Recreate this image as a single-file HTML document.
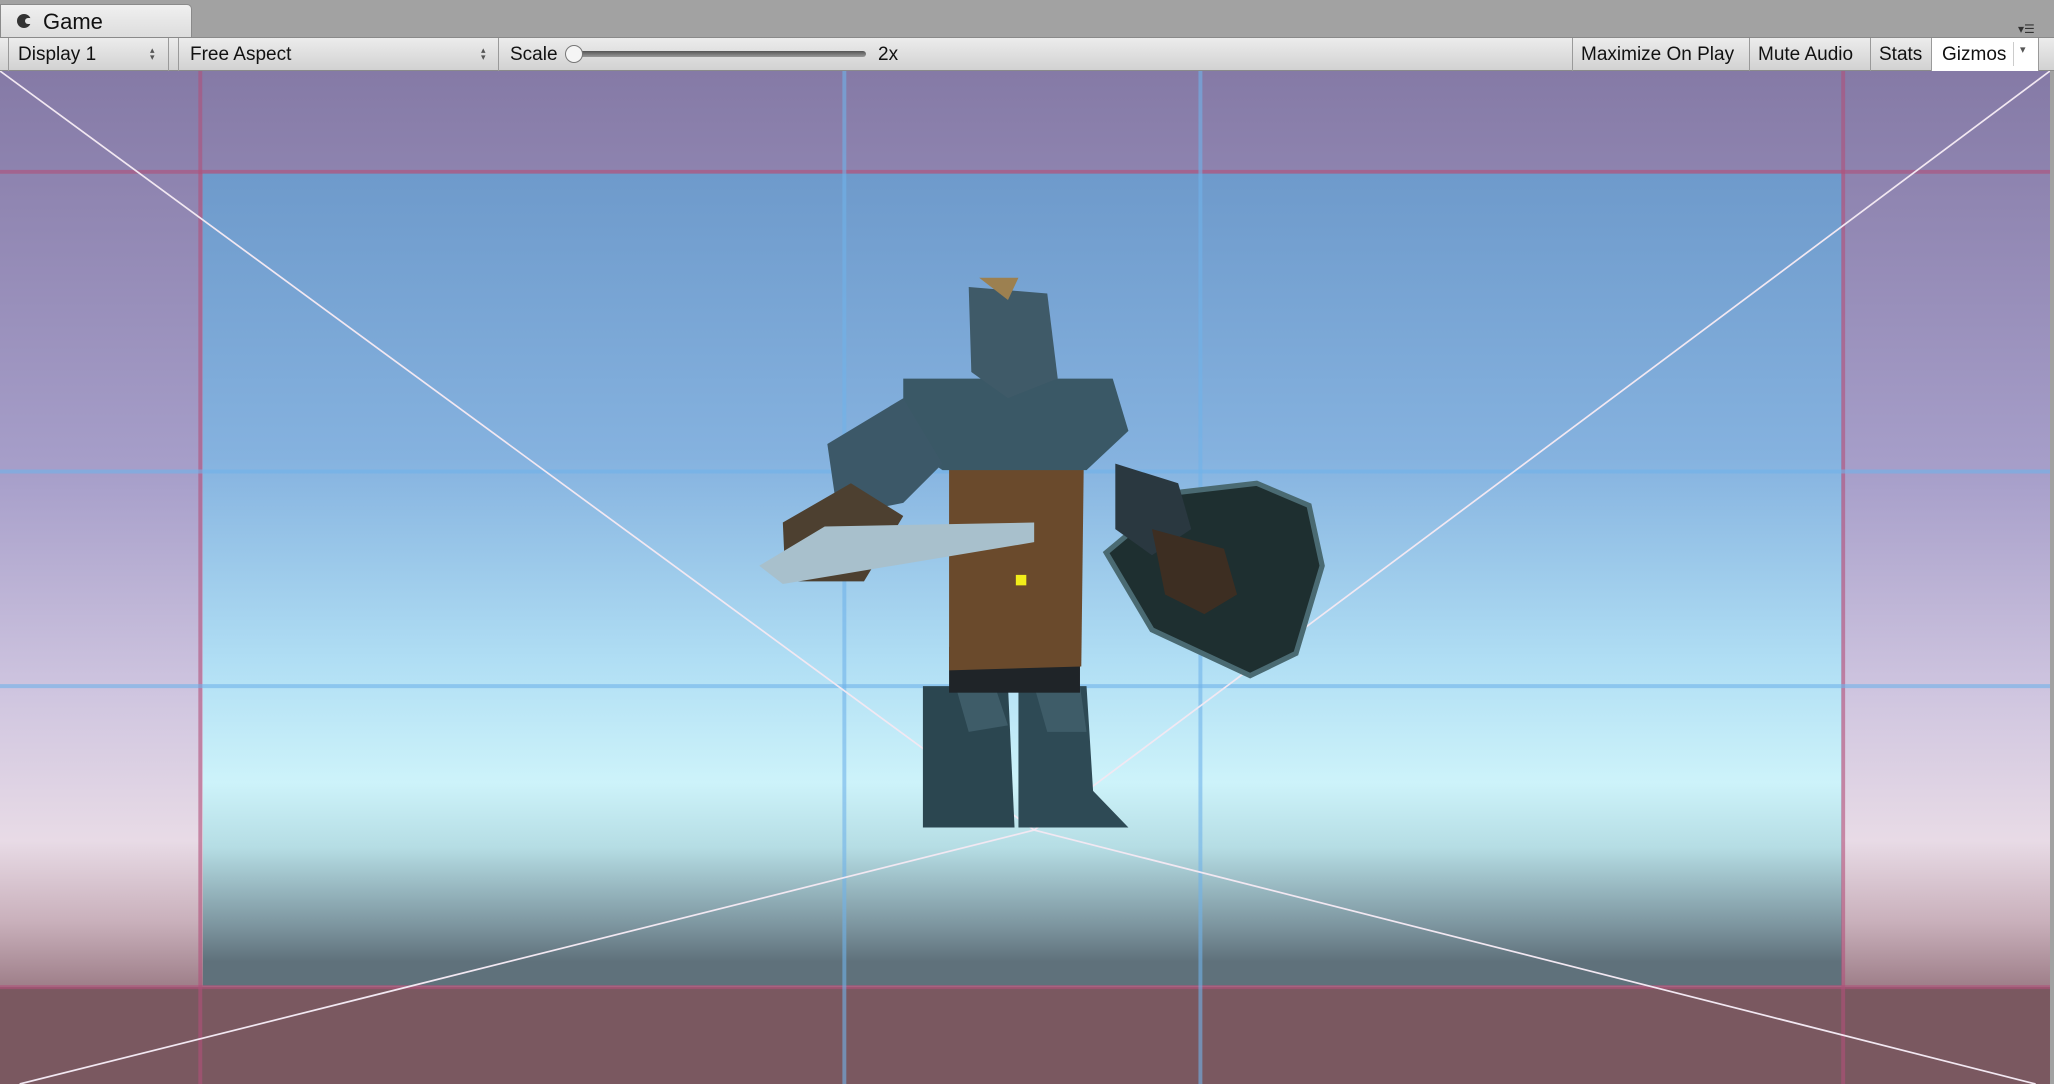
<!DOCTYPE html>
<html><head><meta charset="utf-8"><style>
html,body{margin:0;padding:0;width:2054px;height:1084px;overflow:hidden;background:#a2a2a2;font-family:"Liberation Sans",sans-serif}
.tab{position:absolute;left:0;top:4px;width:192px;height:34px;background:linear-gradient(#f0f0f0,#dcdcdc);border:1px solid #8a8a8a;border-bottom:none;border-radius:0 5px 0 0;box-sizing:border-box}
.tab span{position:absolute;left:42px;top:4px;font-size:22px;color:#111}
.tab i{position:absolute;left:16px;top:9px;width:14px;height:14px;border-radius:50%;background:#333}
.tab i:after{content:"";position:absolute;left:8px;top:4px;width:8px;height:6px;background:#e6e6e6;border-radius:3px}
.bar{position:absolute;left:0;top:37px;width:2054px;height:34px;background:linear-gradient(#ececec,#d2d2d2);border-top:1px solid #8a8a8a;border-bottom:1px solid #8a8a8a;box-sizing:border-box}
.t{position:absolute;top:6px;font-size:19px;color:#111;white-space:nowrap}
.sep{position:absolute;top:0;width:1px;height:33px;background:#9a9a9a}
.btn{position:absolute;top:0;height:33px;border-left:1px solid #9a9a9a;box-sizing:border-box}
.ud{position:absolute;top:9px;font-size:9px;line-height:7px;color:#555}
</style></head><body>
<div class="tab"><i></i><span>Game</span></div>
<div style="position:absolute;left:2018px;top:22px;font-size:12px;color:#333">▾☰</div>
<div class="bar">
 <div class="sep" style="left:8px"></div>
 <div class="t" style="left:18px">Display 1</div>
 <div class="ud" style="left:150px">▴<br>▾</div>
 <div class="sep" style="left:168px"></div><div class="sep" style="left:178px"></div>
 <div class="t" style="left:190px">Free Aspect</div>
 <div class="ud" style="left:481px">▴<br>▾</div>
 <div class="sep" style="left:498px"></div>
 <div class="t" style="left:510px">Scale</div>
 <div style="position:absolute;left:572px;top:13px;width:294px;height:6px;border-radius:3px;background:linear-gradient(#555,#999)"></div>
 <div style="position:absolute;left:565px;top:7px;width:16px;height:16px;border-radius:50%;background:#f5f5f5;border:1px solid #777"></div>
 <div class="t" style="left:878px">2x</div>
 <div class="btn" style="left:1572px;width:177px"><div class="t" style="left:8px">Maximize On Play</div></div>
 <div class="btn" style="left:1749px;width:121px"><div class="t" style="left:8px">Mute Audio</div></div>
 <div class="btn" style="left:1870px;width:61px"><div class="t" style="left:8px">Stats</div></div>
 <div class="btn" style="left:1931px;width:108px;background:#fff;border-right:1px solid #9a9a9a"><div class="t" style="left:10px">Gizmos</div><div style="position:absolute;left:81px;top:4px;width:1px;height:24px;background:#ccc"></div><div style="position:absolute;left:88px;top:5px;font-size:11px;color:#555">▾</div></div>
</div>
<svg style="position:absolute;left:0;top:71px" width="2050" height="1013" viewBox="0 0 1566 774" preserveAspectRatio="none">
<defs>
<linearGradient id="sky" x1="0" y1="0" x2="0" y2="1">
<stop offset="0" stop-color="#6e9acb"/><stop offset="0.35" stop-color="#85b2df"/><stop offset="0.6" stop-color="#b0def4"/><stop offset="0.75" stop-color="#cdf3fa"/><stop offset="0.83" stop-color="#b5dde4"/><stop offset="0.93" stop-color="#7a929c"/><stop offset="0.97" stop-color="#5f717b"/><stop offset="1" stop-color="#5f717b"/></linearGradient>
<linearGradient id="out" x1="0" y1="0" x2="0" y2="1">
<stop offset="0" stop-color="#857aa6"/><stop offset="0.4" stop-color="#a79fca"/><stop offset="0.62" stop-color="#d0c6e0"/><stop offset="0.76" stop-color="#e8dbe6"/><stop offset="0.84" stop-color="#c9b0bb"/><stop offset="0.94" stop-color="#86636d"/><stop offset="1" stop-color="#7a5760"/></linearGradient>
</defs>
<rect width="1566" height="774" fill="url(#out)"/>
<rect x="0" y="700" width="1566" height="74" fill="#7a5860"/>
<rect x="155" y="78" width="1252" height="621" fill="url(#sky)"/>
<g stroke="#b0507a" stroke-opacity="0.6" stroke-width="3">
<line x1="153" y1="0" x2="153" y2="774"/><line x1="1408" y1="0" x2="1408" y2="774"/>
<line x1="0" y1="77" x2="1566" y2="77"/><line x1="0" y1="700" x2="1566" y2="700"/></g>
<g stroke="#6fb3ea" stroke-opacity="0.6" stroke-width="3">
<line x1="645" y1="0" x2="645" y2="774"/><line x1="917" y1="0" x2="917" y2="774"/>
<line x1="0" y1="306" x2="1566" y2="306"/><line x1="0" y1="470" x2="1566" y2="470"/></g>
<g stroke="#f2e8f2" stroke-width="1.3" fill="none">
<line x1="0" y1="0" x2="790" y2="580"/><line x1="1566" y1="0" x2="790" y2="580"/>
<line x1="15" y1="774" x2="790" y2="580"/><line x1="1555" y1="774" x2="790" y2="580"/></g>
<g>
<polygon points="845,368 900,322 960,315 1000,332 1010,378 990,445 955,462 880,427" fill="#1e2f30" stroke="#4a6a72" stroke-width="4"/>
<polygon points="705,470 770,470 775,578 705,578" fill="#2b4650"/>
<polygon points="778,470 830,470 835,550 862,578 778,578" fill="#2e4a55"/>
<polygon points="730,470 760,470 770,500 740,505" fill="#3e5c68"/>
<polygon points="790,470 825,470 830,505 800,505" fill="#3e5c68"/>
<rect x="725" y="440" width="100" height="35" fill="#1f2428"/>
<polygon points="725,290 828,290 826,455 725,458" fill="#6a4a2c"/>
<polygon points="690,235 850,235 862,275 830,305 720,305 690,285" fill="#3a5866"/>
<polygon points="632,285 690,250 720,300 690,330 640,340" fill="#3c5868"/>
<polygon points="598,345 650,315 690,340 660,390 600,390" fill="#4d4030"/>
<polygon points="852,300 900,315 910,350 880,370 852,350" fill="#2a3840"/>
<polygon points="880,350 935,365 945,400 920,415 890,400" fill="#3d2e22"/>
<polygon points="580,378 630,348 790,345 790,360 640,385 598,392" fill="#a8c0cc"/>
<polygon points="740,165 800,170 808,235 770,250 742,230" fill="#3f5a68"/>
<polygon points="748,158 778,158 770,175" fill="#9c8050"/>
<rect x="776" y="385" width="8" height="8" fill="#f2ee1a"/>
</g>
</svg>
<div style="position:absolute;left:2050px;top:71px;width:4px;height:1013px;background:#a2a2a2"></div>
</body></html>
